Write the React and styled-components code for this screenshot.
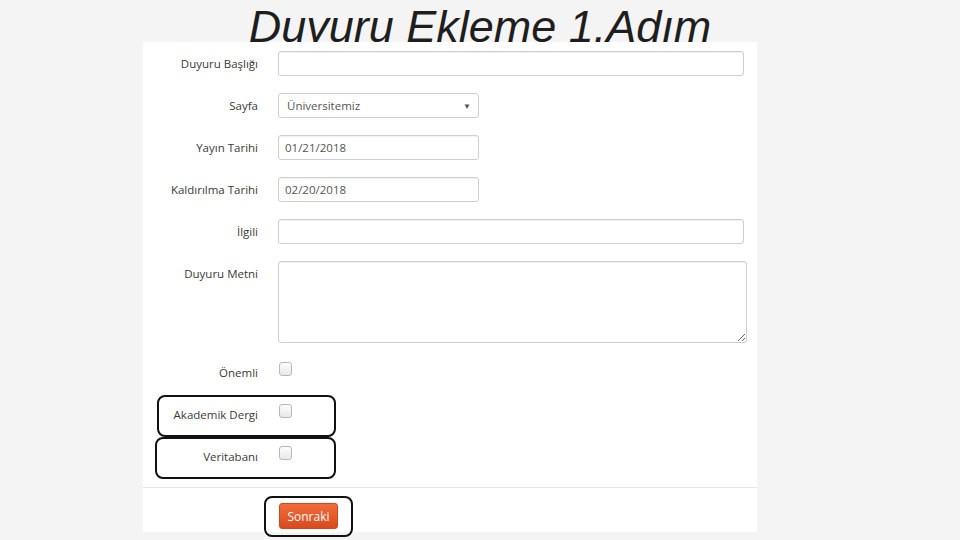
import React from "react";
import styled, { createGlobalStyle, css } from "styled-components";

const GlobalStyle = createGlobalStyle`
  html, body {
    margin: 0;
    padding: 0;
    background: #f4f4f4;
  }
  * {
    box-sizing: border-box;
  }
`;

const FIELDS = [
  { label: "Duyuru Başlığı", kind: "text", wide: true },
  { label: "Sayfa", kind: "select", value: "Üniversitemiz" },
  { label: "Yayın Tarihi", kind: "text", value: "01/21/2018" },
  { label: "Kaldırılma Tarihi", kind: "text", value: "02/20/2018" },
  { label: "İlgili", kind: "text", wide: true },
];

const CHECKS = [
  { label: "Önemli" },
  { label: "Akademik Dergi", mark: { left: 14, width: 175 } },
  { label: "Veritabanı", mark: { left: 12, width: 177 } },
];

const markBox = css`
  position: absolute;
  content: "";
  border: 2.5px solid #111;
  border-radius: 8px;
  pointer-events: none;
`;

const App = () => {
  return (
    <>
      <GlobalStyle />
      <StPage>
        <StTitle>Duyuru Ekleme 1.Adım</StTitle>
        <StPanel>
          <StForm>
            {FIELDS.map((f) => (
              <StRow key={f.label}>
                <StLabel>{f.label}</StLabel>
                {f.kind === "select" ? (
                  <StSelect>
                    <span>{f.value}</span>
                    <StCaret>▼</StCaret>
                  </StSelect>
                ) : (
                  <StInput $wide={f.wide} defaultValue={f.value || ""} readOnly />
                )}
              </StRow>
            ))}
            <StRow>
              <StLabel>Duyuru Metni</StLabel>
              <StTextarea />
            </StRow>
            <StChecks>
              {CHECKS.map((c) => (
                <StCheckRow key={c.label} $mark={c.mark}>
                  <StCheckLabel>{c.label}</StCheckLabel>
                  <StCheckbox type="checkbox" />
                </StCheckRow>
              ))}
            </StChecks>
          </StForm>
          <StFooter>
            <StMarked>
              <StButton>Sonraki</StButton>
            </StMarked>
          </StFooter>
        </StPanel>
      </StPage>
    </>
  );
};

export default App;

const StPage = styled.div`
  width: 960px;
  height: 540px;
  overflow: hidden;
  font-family: "Open Sans", "Noto Sans", sans-serif;
`;

const StTitle = styled.h1`
  margin: 0;
  height: 42px;
  overflow: hidden;
  padding-top: 4px;
  text-align: center;
  font-family: "Liberation Sans", Arial, sans-serif;
  font-style: italic;
  font-weight: 400;
  font-size: 45px;
  line-height: 45px;
  color: #1e1e1e;
`;

const StPanel = styled.div`
  margin-left: 143px;
  width: 614px;
  height: 490px;
  background: #fff;
  display: flex;
  flex-direction: column;
`;

const StForm = styled.div`
  padding: 9px 0 8px;
  border-bottom: 1px solid #e6e6e6;
  display: flex;
  flex-direction: column;
  gap: 17px;
`;

const StRow = styled.div`
  display: flex;
  align-items: flex-start;
  gap: 20px;
`;

const StLabel = styled.label`
  width: 115px;
  flex-shrink: 0;
  text-align: right;
  font-size: 11.5px;
  line-height: 25px;
  color: #3a3a3a;
`;

const fieldBase = css`
  height: 25px;
  border: 1px solid #cfcfcf;
  border-radius: 3px;
  background: #fff;
  box-shadow: inset 0 1px 1px rgba(0, 0, 0, 0.06);
  font-family: "Open Sans", "Noto Sans", sans-serif;
  font-size: 11.5px;
  color: #555;
  padding: 0 6px;
`;

const StInput = styled.input`
  ${fieldBase};
  width: ${({ $wide }) => ($wide ? "466px" : "201px")};
  outline: none;
`;

const StSelect = styled.div`
  ${fieldBase};
  width: 201px;
  display: flex;
  align-items: center;
  justify-content: space-between;
  padding: 0 7px 0 8px;
  box-shadow: none;
`;

const StCaret = styled.span`
  font-size: 8px;
  color: #555;
`;

const StTextarea = styled.textarea`
  ${fieldBase};
  width: 469px;
  height: 82px;
  resize: both;
`;

const StChecks = styled.div`
  display: flex;
  flex-direction: column;
  margin-top: -7px;
`;

const StCheckRow = styled.div`
  position: relative;
  display: flex;
  gap: 21px;
  height: 42px;
  padding-top: 9px;

  ${({ $mark }) =>
    $mark &&
    css`
      &::after {
        ${markBox};
        top: 0;
        bottom: 0;
        left: ${$mark.left}px;
        width: ${$mark.width}px;
      }
    `}
`;

const StCheckLabel = styled.span`
  width: 115px;
  text-align: right;
  font-size: 11.5px;
  line-height: 20px;
  padding-top: 1px;
  color: #3a3a3a;
`;

const StCheckbox = styled.input`
  appearance: none;
  margin: 0;
  width: 13px;
  height: 14px;
  border: 1px solid #b9b9b9;
  border-radius: 3px;
  background: linear-gradient(#fdfdfd, #e8e8e8);
`;

const StFooter = styled.div`
  padding: 15px 0 0 136px;
`;

const StMarked = styled.div`
  position: relative;
  display: inline-block;

  &::after {
    ${markBox};
    top: -7px;
    bottom: -8px;
    left: -15px;
    right: -15px;
  }
`;

const StButton = styled.button`
  width: 59px;
  height: 26px;
  border: 1px solid #d0471c;
  border-radius: 3px;
  background: linear-gradient(#f26c3a, #d94a1e);
  color: #fff;
  font-family: "Open Sans", "Noto Sans", sans-serif;
  font-size: 12px;
  padding: 0;
`;
